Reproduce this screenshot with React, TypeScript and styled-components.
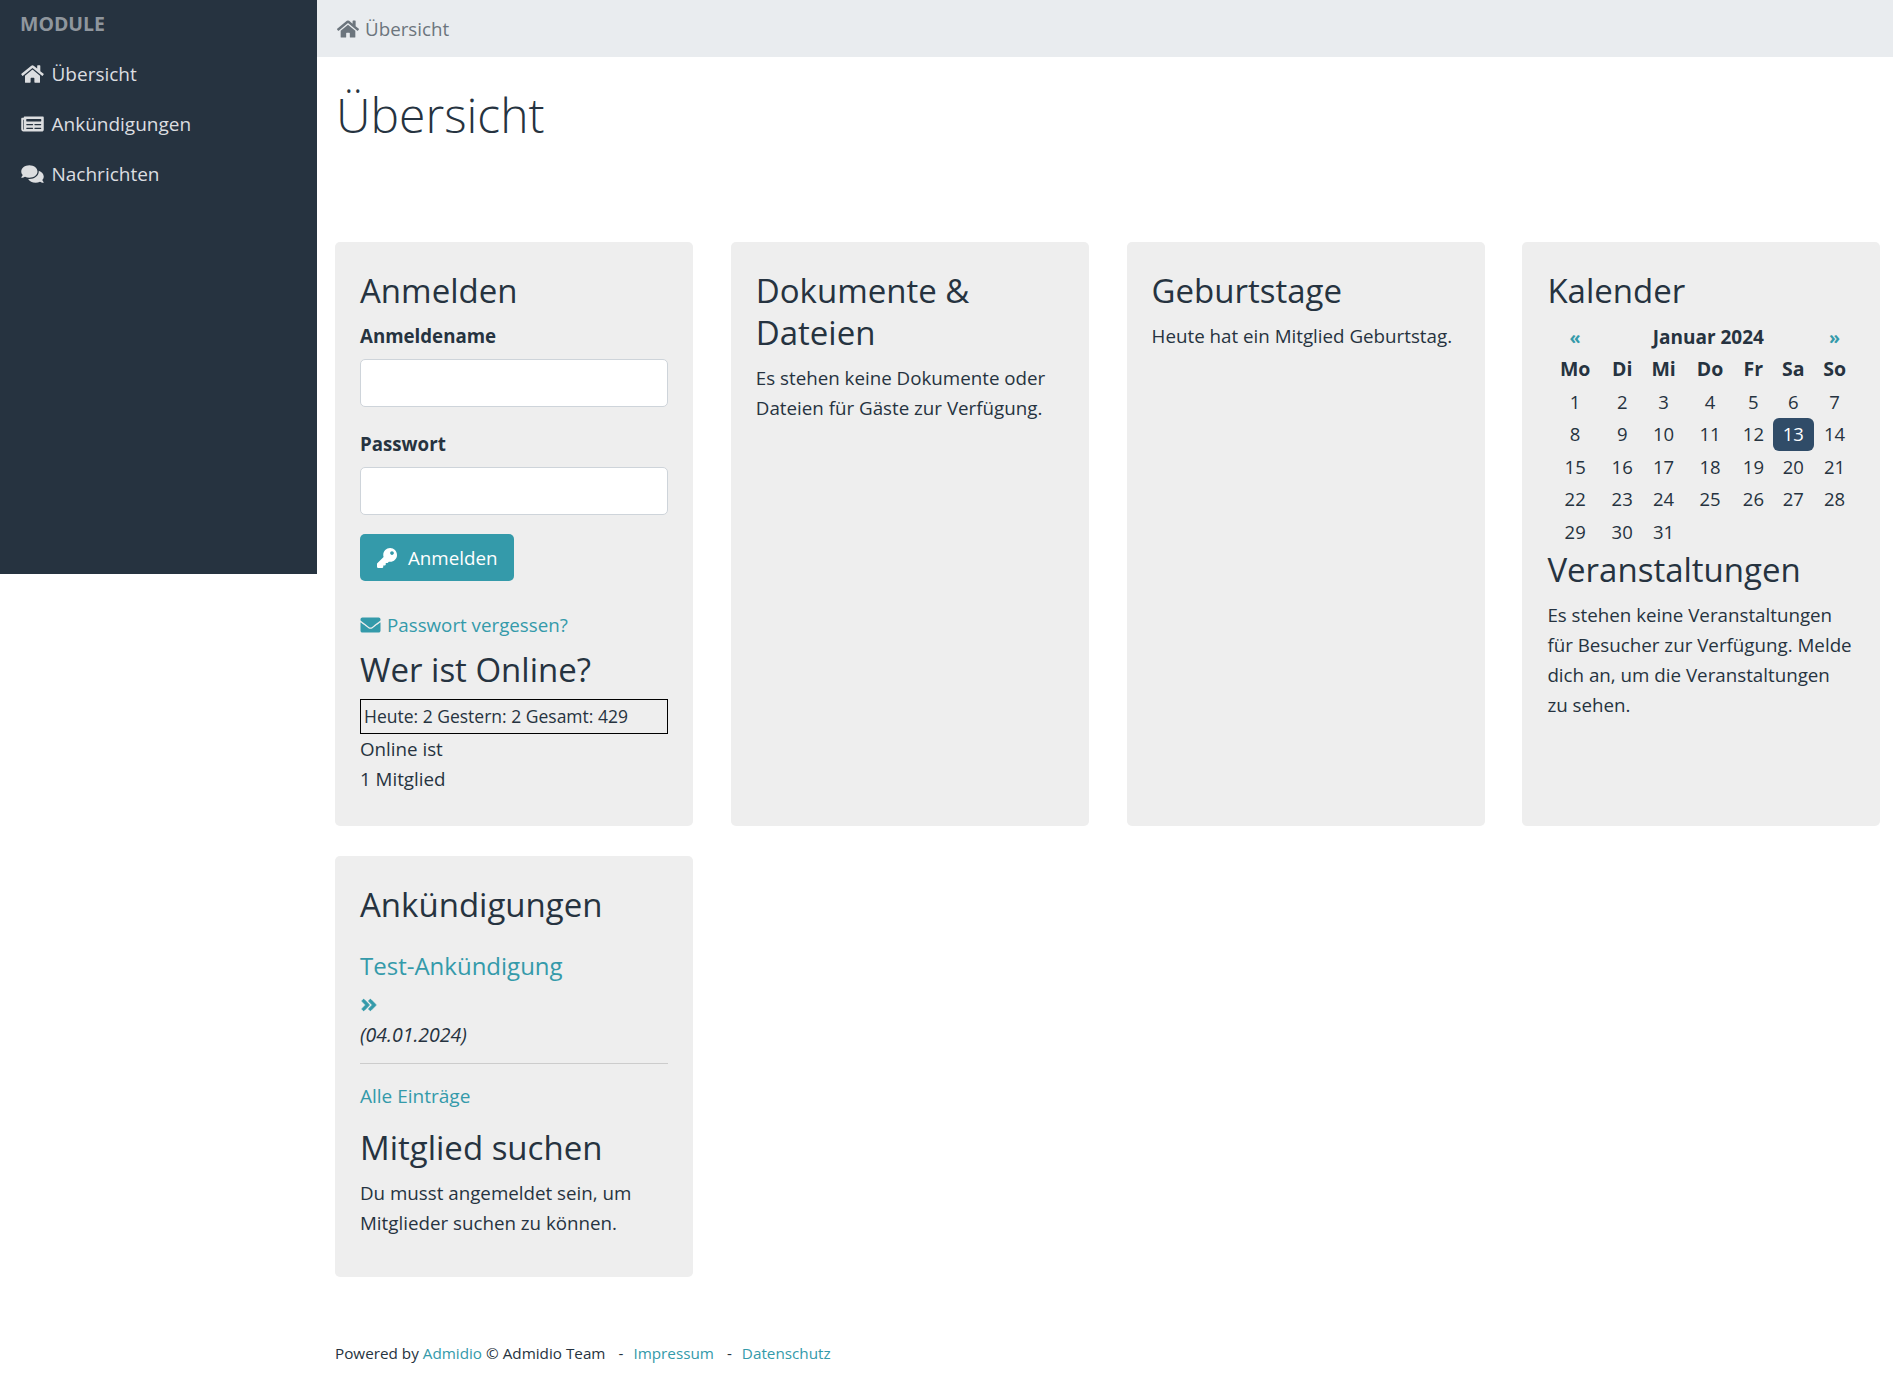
import React from 'react';
import styled, { createGlobalStyle } from 'styled-components';
import {
  FaHome,
  FaNewspaper,
  FaComments,
  FaKey,
  FaEnvelope,
  FaAngleDoubleRight,
} from 'react-icons/fa';

const GlobalStyle = createGlobalStyle`
  * { box-sizing: border-box; }
  html, body { margin: 0; padding: 0; background: #fff; }
  body {
    font-family: "Open Sans", "Noto Sans", sans-serif;
    font-size: 18.75px;
    line-height: 30px;
    color: #263340;
  }
  a { color: #349aaa; text-decoration: none; }
`;

const Page = styled.div`
  display: flex;
  align-items: flex-start;
  width: 1893px;
  min-height: 1398px;
`;

const Sidebar = styled.nav`
  width: 317px;
  height: 574px;
  flex: none;
  background: #263340;
  padding: 9px 21px 0 20px;
`;

const SidebarTitle = styled.div`
  font-size: 19.5px;
  font-weight: 700;
  line-height: 30px;
  color: #8f969d;
  text-transform: uppercase;
  margin-bottom: 10px;
`;

const MenuItem = styled.a`
  display: flex;
  align-items: center;
  height: 50px;
  font-size: 19px;
  color: #dcdee0;
  svg {
    width: 23px;
    height: 20px;
    margin-left: 1px;
    margin-right: 7.5px;
    flex: none;
  }
`;

const Main = styled.main`
  flex: 1;
  min-width: 0;
`;

const Breadcrumb = styled.div`
  display: flex;
  align-items: center;
  height: 57px;
  padding-left: 20px;
  background: #e9ecef;
  color: #6c757d;
  svg {
    width: 22px;
    height: 20px;
    margin-right: 6px;
  }
`;

const Content = styled.div`
  padding: 0 13px 0 18px;
`;

const PageTitle = styled.h1`
  margin: 22px 0 0 1px;
  font-size: 48px;
  font-weight: 300;
  line-height: 72px;
  height: 92px;
`;

const CardGrid = styled.div`
  display: grid;
  grid-template-columns: repeat(4, 358px);
  column-gap: 37.8px;
  row-gap: 30px;
  margin-top: 71px;
`;

const Card = styled.section<{ $height: number }>`
  height: ${(p) => p.$height}px;
  background: #eeeeee;
  border-radius: 5px;
  padding: 28px 25px 0;
`;

const CardTitle = styled.h3<{ $top?: number }>`
  margin: ${(p) => p.$top ?? 0}px 0 0;
  font-size: 33px;
  font-weight: 400;
  line-height: 42px;
`;

const Label = styled.label<{ $top: number }>`
  display: block;
  font-size: 18.7px;
  font-weight: 700;
  line-height: 30px;
  margin-top: ${(p) => p.$top}px;
`;

const Input = styled.input`
  display: block;
  width: 100%;
  height: 48px;
  margin: 8px 0 0;
  background: #fff;
  border: 1px solid #ced4da;
  border-radius: 5px;
`;

const Button = styled.button`
  display: inline-flex;
  align-items: center;
  height: 47px;
  margin-top: 19px;
  padding: 0 17px;
  background: #349aaa;
  color: #fff;
  border: 0;
  border-radius: 5px;
  font: inherit;
  svg {
    width: 20px;
    height: 20px;
    margin-right: 11px;
  }
`;

const IconLink = styled.a`
  display: flex;
  align-items: center;
  margin-top: 29px;
  svg {
    width: 21px;
    height: 20px;
    margin-right: 6px;
  }
`;

const CounterBox = styled.div`
  height: 35px;
  margin-top: 8px;
  padding-left: 3px;
  border: 1px solid #000;
  font-size: 17.5px;
  line-height: 32px;
`;

const Text = styled.p<{ $top?: number }>`
  margin: ${(p) => p.$top ?? 0}px 0 0;
`;

const EventsText = styled(Text)`
  padding-right: 2px;
`;

const CalendarTable = styled.table`
  width: 100%;
  border-collapse: collapse;
  margin-top: 8.5px;
  text-align: center;
  font-size: 18.5px;
  line-height: 32.5px;
  th, td {
    padding: 0;
    height: 32.5px;
    font-weight: 400;
  }
  thead th {
    font-size: 19.5px;
    font-weight: 700;
  }
`;

const MonthCell = styled.th`
  && { font-size: 19px; font-weight: 700; }
`;

const NavCell = styled.th`
  && { font-size: 18px; color: #349aaa; }
`;

const Today = styled.td`
  && {
    background: #304c68;
    color: #fff;
    border-radius: 6px;
  }
`;

const NewsLink = styled.a`
  display: block;
  font-size: 24px;
  line-height: 36px;
  margin-top: 22px;
`;

const MoreLink = styled.a`
  display: block;
  margin-top: 4px;
  height: 32px;
  svg {
    width: 18px;
    height: 18px;
    vertical-align: -4px;
    stroke: currentColor;
    stroke-width: 24;
  }
`;

const NewsDate = styled.div`
  font-size: 19.5px;
  font-style: italic;
`;

const Divider = styled.hr`
  margin: 13px 0 17px;
  border: 0;
  border-top: 1px solid #ccc;
`;

const AllLink = styled.a`
  font-size: 19px;
`;

const Footer = styled.footer`
  margin-top: 64px;
  font-size: 15.25px;
  line-height: 24px;
  color: #263340;
`;

const Sep = styled.span`
  margin: 0 10px 0 13px;
`;

const weeks = [
  [1, 2, 3, 4, 5, 6, 7],
  [8, 9, 10, 11, 12, 13, 14],
  [15, 16, 17, 18, 19, 20, 21],
  [22, 23, 24, 25, 26, 27, 28],
  [29, 30, 31],
];

export default function App() {
  return (
    <>
      <GlobalStyle />
      <Page>
        <Sidebar>
          <SidebarTitle>Module</SidebarTitle>
          <MenuItem href="#"><FaHome />Übersicht</MenuItem>
          <MenuItem href="#"><FaNewspaper />Ankündigungen</MenuItem>
          <MenuItem href="#"><FaComments />Nachrichten</MenuItem>
        </Sidebar>
        <Main>
          <Breadcrumb><FaHome />Übersicht</Breadcrumb>
          <Content>
            <PageTitle>Übersicht</PageTitle>
            <CardGrid>
              <Card $height={584}>
                <CardTitle>Anmelden</CardTitle>
                <Label $top={9}>Anmeldename</Label>
                <Input type="text" />
                <Label $top={22}>Passwort</Label>
                <Input type="password" />
                <Button><FaKey />Anmelden</Button>
                <IconLink href="#"><FaEnvelope />Passwort vergessen?</IconLink>
                <CardTitle $top={9}>Wer ist Online?</CardTitle>
                <CounterBox>Heute: 2 Gestern: 2 Gesamt: 429</CounterBox>
                <Text>Online ist</Text>
                <Text>1 Mitglied</Text>
              </Card>
              <Card $height={584}>
                <CardTitle>Dokumente &amp; Dateien</CardTitle>
                <Text $top={9}>Es stehen keine Dokumente oder Dateien für Gäste zur Verfügung.</Text>
              </Card>
              <Card $height={584}>
                <CardTitle>Geburtstage</CardTitle>
                <Text $top={9}>Heute hat ein Mitglied Geburtstag.</Text>
              </Card>
              <Card $height={584}>
                <CardTitle>Kalender</CardTitle>
                <CalendarTable>
                  <thead>
                    <tr>
                      <NavCell><a href="#">«</a></NavCell>
                      <MonthCell colSpan={5}>Januar 2024</MonthCell>
                      <NavCell><a href="#">»</a></NavCell>
                    </tr>
                    <tr>
                      {['Mo', 'Di', 'Mi', 'Do', 'Fr', 'Sa', 'So'].map((d) => (
                        <th key={d}>{d}</th>
                      ))}
                    </tr>
                  </thead>
                  <tbody>
                    {weeks.map((week) => (
                      <tr key={week[0]}>
                        {week.map((day) =>
                          day === 13 ? <Today key={day}>{day}</Today> : <td key={day}>{day}</td>
                        )}
                      </tr>
                    ))}
                  </tbody>
                </CalendarTable>
                <CardTitle $top={1}>Veranstaltungen</CardTitle>
                <EventsText $top={9}>
                  Es stehen keine Veranstaltungen für Besucher zur Verfügung. Melde dich an, um die Veranstaltungen zu sehen.
                </EventsText>
              </Card>
              <Card $height={420.5}>
                <CardTitle>Ankündigungen</CardTitle>
                <NewsLink href="#">Test-Ankündigung</NewsLink>
                <MoreLink href="#"><FaAngleDoubleRight /></MoreLink>
                <NewsDate>(04.01.2024)</NewsDate>
                <Divider />
                <AllLink href="#">Alle Einträge</AllLink>
                <CardTitle $top={16}>Mitglied suchen</CardTitle>
                <Text $top={9}>Du musst angemeldet sein, um Mitglieder suchen zu können.</Text>
              </Card>
            </CardGrid>
            <Footer>
              Powered by <a href="#">Admidio</a> © Admidio Team<Sep>-</Sep><a href="#">Impressum</a><Sep>-</Sep><a href="#">Datenschutz</a>
            </Footer>
          </Content>
        </Main>
      </Page>
    </>
  );
}
